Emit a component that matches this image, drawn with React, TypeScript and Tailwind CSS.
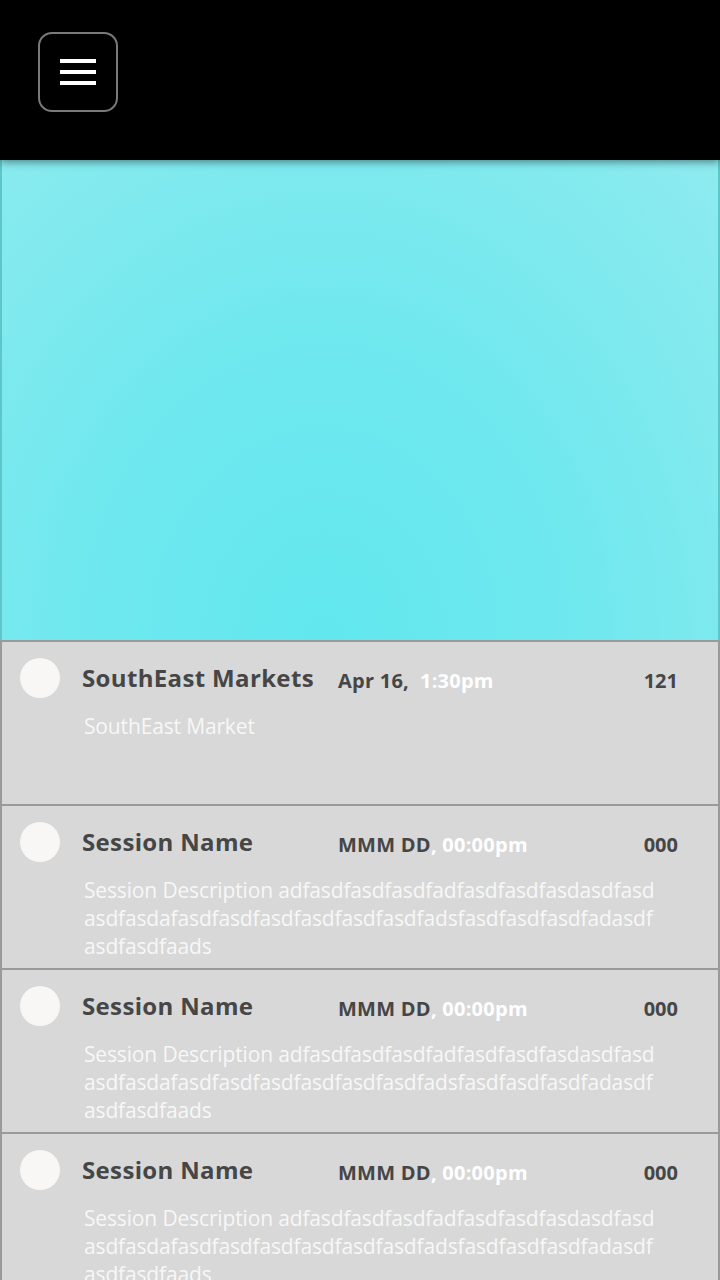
import React from "react";

type Row = {
  title: string;
  date: string;
  time: string;
  count: string;
  desc: string[];
};

const longDesc = [
  "Session Description adfasdfasdfasdfadfasdfasdfasdasdfasd",
  "asdfasdafasdfasdfasdfasdfasdfasdfadsfasdfasdfasdfadasdf",
  "asdfasdfaads",
];

const rows: Row[] = [
  { title: "SouthEast Markets", date: "Apr 16,\u00a0\u00a0", time: "1:30pm", count: "121", desc: ["SouthEast Market"] },
  { title: "Session Name", date: "MMM DD", time: ", 00:00pm", count: "000", desc: longDesc },
  { title: "Session Name", date: "MMM DD", time: ", 00:00pm", count: "000", desc: longDesc },
  { title: "Session Name", date: "MMM DD", time: ", 00:00pm", count: "000", desc: longDesc },
];

function SessionRow({ r }: { r: Row }) {
  return (
    <div className="h-[164px] shrink-0 border-t-2 border-x-2 border-[#9a9a9a] bg-[#d8d8d8] pl-[18px] pr-[40px] pt-[16px]">
      <div className="flex items-center h-[40px]">
        <div className="w-[40px] h-[40px] rounded-full bg-[#f8f7f5] shrink-0" />
        <div className="w-[278px] shrink-0 pl-[22px] text-[24px] font-bold text-[#464646] tracking-[0.35px] leading-none whitespace-nowrap">
          {r.title}
        </div>
        <div className="flex-1 text-[20px] font-bold leading-none mt-[5px] text-[#464646] tracking-[0.25px] whitespace-nowrap">
          {r.date}
          <span className="text-white">{r.time}</span>
        </div>
        <div className="text-[20px] font-bold text-[#464646] leading-none mt-[5px]">{r.count}</div>
      </div>
      <div className="pl-[64px] pt-[14px] text-[21px] font-normal tracking-[-0.15px] leading-[28px] text-[#f7f7f7] whitespace-nowrap">
        {r.desc.map((l, i) => (
          <div key={i}>{l}</div>
        ))}
      </div>
    </div>
  );
}

export default function App() {
  return (
    <div className="w-[720px] h-[1280px] overflow-hidden bg-[#d8d8d8] flex flex-col font-['Open_Sans','Noto_Sans',sans-serif]">
      <div className="h-[160px] shrink-0 bg-black relative z-10 shadow-[0_2px_8px_rgba(0,0,0,0.45)] pt-[32px] pl-[38px]">
        <button className="w-[80px] h-[80px] rounded-[14px] border-2 border-[#7a7a7a] flex flex-col items-center justify-center gap-[7px]">
          <span className="block w-[36px] h-[4px] bg-white" />
          <span className="block w-[36px] h-[4px] bg-white" />
          <span className="block w-[36px] h-[4px] bg-white" />
        </button>
      </div>
      <div className="h-[480px] shrink-0 border-x-2 border-[#5cc6c9] bg-[radial-gradient(ellipse_at_45%_100%,#62e7ee_0%,#6fe8ee_45%,#8eebef_100%)]" />
      {rows.map((r, i) => (
        <SessionRow key={i} r={r} />
      ))}
    </div>
  );
}
